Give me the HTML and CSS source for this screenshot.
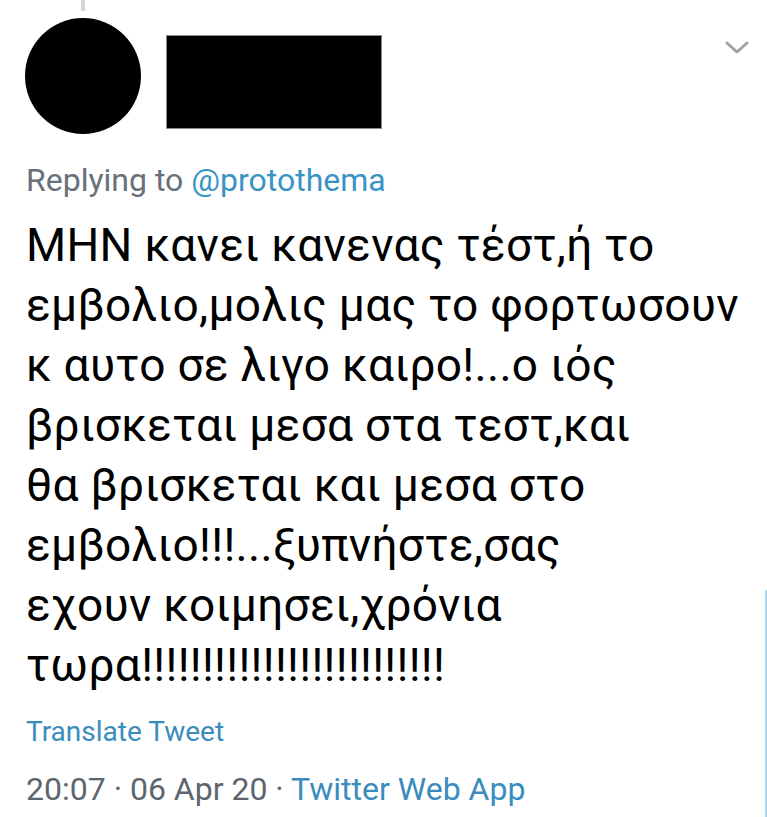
FILE: index.html
```html
<!DOCTYPE html>
<html lang="el">
<head>
    <meta charset="UTF-8">
    <meta name="viewport" content="width=device-width, initial-scale=1.0">
    <title>Tweet</title>
    <link rel="stylesheet" href="styles.css">
</head>
<body>

    <div class="tweet">
        <!-- Header -->
        <div class="tweet-header">
            <div class="avatar-col">
                <div class="thread-line"></div>
                <div class="avatar"></div>
            </div>
            <div class="name-block"></div>
            <div class="caret">
                <svg width="24" height="14" viewBox="0 0 24 14">
                    <path d="M2 2 L12 11 L22 2" fill="none" stroke="#9aa4ab" stroke-width="3" stroke-linecap="round" stroke-linejoin="round"/>
                </svg>
            </div>
        </div>

        <div class="reply">Replying to <span class="mention">@protothema</span></div>

        <div class="tweet-text">ΜΗΝ κανει κανενας τέστ,ή το<br>εμβολιο,μολις μας το φορτωσουν<br>κ αυτο σε λιγο καιρο!...ο ιός<br>βρισκεται μεσα στα τεστ,και<br>θα βρισκεται και μεσα στο<br>εμβολιο!!!...ξυπνήστε,σας<br>εχουν κοιμησει,χρόνια<br>τωρα!!!!!!!!!!!!!!!!!!!!!!!!!</div>

        <div class="translate">Translate Tweet</div>

        <div class="meta">20:07 · 06 Apr 20 · <span class="source">Twitter Web App</span></div>
    </div>

</body>
</html>
```

FILE: styles.css
```css
body {
    margin: 0;
    padding: 0;
    background-color: #fff;
    font-family: Roboto, "Noto Sans", Arial, sans-serif;
    overflow: hidden;
}
.tweet {
    position: relative;
    width: 767px;
    height: 817px;
    padding-left: 26px;
    box-sizing: border-box;
}
/* blue edge of the next panel on the right */
.tweet::after {
    content: "";
    position: absolute;
    right: 0;
    top: 590px;
    bottom: 0;
    width: 2px;
    background-color: #a9d5ef;
}
.tweet-header {
    display: flex;
    align-items: flex-start;
}
.avatar-col {
    display: flex;
    flex-direction: column;
    align-items: center;
    width: 116px;
    margin-left: -1px;
}
.thread-line {
    width: 4px;
    height: 11px;
    background-color: #d3d6d9;
    margin-bottom: 7px;
}
.avatar {
    width: 116px;
    height: 116px;
    border-radius: 50%;
    background-color: #000;
}
.name-block {
    width: 214px;
    height: 92px;
    margin-top: 35px;
    margin-left: 25px;
    background-color: #000;
    border: 1px solid #8a8a8a;
}
.caret {
    margin-left: auto;
    margin-top: 41px;
    margin-right: 18px;
    line-height: 0;
}
.reply {
    margin-top: 27px;
    font-size: 32px;
    line-height: 38px;
    color: #66717b;
}
.mention {
    color: #3b93c4;
}
.tweet-text {
    margin-top: 16px;
    font-size: 46px;
    line-height: 60px;
    letter-spacing: 0.3px;
    color: #000;
    white-space: nowrap;
}
.translate {
    margin-top: 20px;
    font-size: 28px;
    line-height: 34px;
    color: #3a8cbd;
}
.meta {
    margin-top: 21px;
    font-size: 32px;
    line-height: 38px;
    color: #5d666e;
}
.source {
    color: #3a8cbd;
}
```
